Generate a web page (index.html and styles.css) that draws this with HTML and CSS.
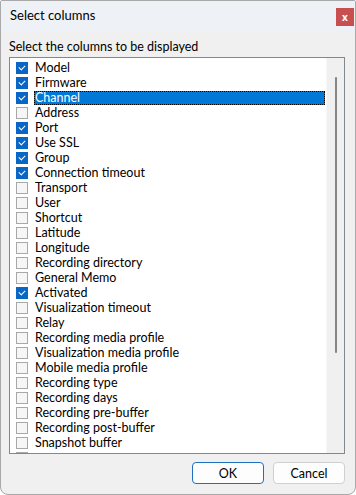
FILE: index.html
```html
<!DOCTYPE html>
<html lang="en">
<head>
  <meta charset="UTF-8" />
  <title>Select columns</title>
  <link rel="stylesheet" href="styles.css">
</head>
<body>
  <div class="window">
    <div class="titlebar">
      <span class="title">Select columns</span>
      <span class="close">x</span>
    </div>

    <div class="content">
      <div class="heading">Select the columns to be displayed</div>

      <div class="listbox">
        <div class="rows">
          <div class="row"><span class="box checked"></span><span class="label">Model</span></div>
          <div class="row"><span class="box checked"></span><span class="label">Firmware</span></div>
          <div class="row"><span class="box checked"></span><span class="label selected">Channel</span></div>
          <div class="row"><span class="box"></span><span class="label">Address</span></div>
          <div class="row"><span class="box checked"></span><span class="label">Port</span></div>
          <div class="row"><span class="box checked"></span><span class="label">Use SSL</span></div>
          <div class="row"><span class="box checked"></span><span class="label">Group</span></div>
          <div class="row"><span class="box checked"></span><span class="label">Connection timeout</span></div>
          <div class="row"><span class="box"></span><span class="label">Transport</span></div>
          <div class="row"><span class="box"></span><span class="label">User</span></div>
          <div class="row"><span class="box"></span><span class="label">Shortcut</span></div>
          <div class="row"><span class="box"></span><span class="label">Latitude</span></div>
          <div class="row"><span class="box"></span><span class="label">Longitude</span></div>
          <div class="row"><span class="box"></span><span class="label">Recording directory</span></div>
          <div class="row"><span class="box"></span><span class="label">General Memo</span></div>
          <div class="row"><span class="box checked"></span><span class="label">Activated</span></div>
          <div class="row"><span class="box"></span><span class="label">Visualization timeout</span></div>
          <div class="row"><span class="box"></span><span class="label">Relay</span></div>
          <div class="row"><span class="box"></span><span class="label">Recording media profile</span></div>
          <div class="row"><span class="box"></span><span class="label">Visualization media profile</span></div>
          <div class="row"><span class="box"></span><span class="label">Mobile media profile</span></div>
          <div class="row"><span class="box"></span><span class="label">Recording type</span></div>
          <div class="row"><span class="box"></span><span class="label">Recording days</span></div>
          <div class="row"><span class="box"></span><span class="label">Recording pre-buffer</span></div>
          <div class="row"><span class="box"></span><span class="label">Recording post-buffer</span></div>
          <div class="row"><span class="box"></span><span class="label">Snapshot buffer</span></div>
          <div class="row"><span class="box"></span></div>
        </div>
        <div class="scrollbar"><div class="thumb"></div></div>
      </div>
    </div>

    <div class="buttons">
      <button class="btn default">OK</button>
      <button class="btn">Cancel</button>
    </div>
  </div>
</body>
</html>
```

FILE: styles.css
```css
body {
  margin: 0;
  background: #fff;
  font-family: Lato, 'Noto Sans', sans-serif;
  font-size: 12.5px;
  color: #000;
}

.window {
  width: 354px;
  height: 493px;
  border: 1px solid #a9a9a9;
  border-radius: 2px 2px 8px 8px;
  background: #f0f0f0;
  overflow: hidden;
  display: flex;
  flex-direction: column;
}

.titlebar {
  height: 30px;
  flex: none;
  background: #eef2f7;
  display: flex;
  align-items: center;
  justify-content: space-between;
  padding: 0 1px 0 9px;
}

.title {
  font-size: 13px;
  margin-top: -2px;
}

.close {
  width: 18px;
  height: 18px;
  background: #c84f4f;
  color: #fff;
  font-family: 'Noto Sans', sans-serif;
  font-size: 10px;
  font-weight: bold;
  display: flex;
  align-items: center;
  justify-content: center;
  margin-top: 2px;
}

.content {
  padding: 7px 10px 0 8px;
}

.heading {
  line-height: 18px;
  margin-bottom: 1px;
}

.listbox {
  height: 395px;
  border: 1px solid #828790;
  background: #fff;
  display: flex;
  overflow: hidden;
}

.rows {
  flex: 1;
  padding: 2px 0 0 6px;
}

.row {
  height: 15px;
  display: flex;
  align-items: center;
}

.box {
  width: 10px;
  height: 10px;
  border: 1px solid #a8a8a8;
  background: #f6f6f6;
  margin-right: 6px;
  flex: none;
  position: relative;
}

.box.checked {
  background: #0a66c4;
  border-color: #0a66c4;
}

.box.checked::after {
  content: "";
  position: absolute;
  left: 2px;
  top: 1px;
  width: 5px;
  height: 3px;
  border-left: 1.3px solid #fff;
  border-bottom: 1.3px solid #fff;
  transform: rotate(-45deg);
  transform-origin: center;
  margin-top: 1px;
}

.label {
  line-height: 14px;
  height: 14px;
  padding: 0 1px;
  white-space: nowrap;
}

.label.selected {
  flex: 1;
  background: #0078d7;
  color: #fff;
  outline: 1px dotted #000;
  outline-offset: -1px;
  margin-right: 1px;
}

.scrollbar {
  width: 17px;
  flex: none;
  background: #f0f0f0;
  border-left: 1px solid #f7f7f7;
  display: flex;
  justify-content: center;
}

.thumb {
  width: 2px;
  height: 276px;
  margin-top: 19px;
  background: #858585;
  border-radius: 1px;
}

.buttons {
  display: flex;
  justify-content: flex-end;
  gap: 9px;
  padding: 8px 10px 0 0;
}

.btn {
  width: 72px;
  height: 22px;
  font-family: inherit;
  font-size: 12.5px;
  background: #fdfdfd;
  border: 1px solid #d0d0d0;
  border-radius: 4px;
  padding: 0;
}

.btn.default {
  border-color: #1e6fbf;
}
```
